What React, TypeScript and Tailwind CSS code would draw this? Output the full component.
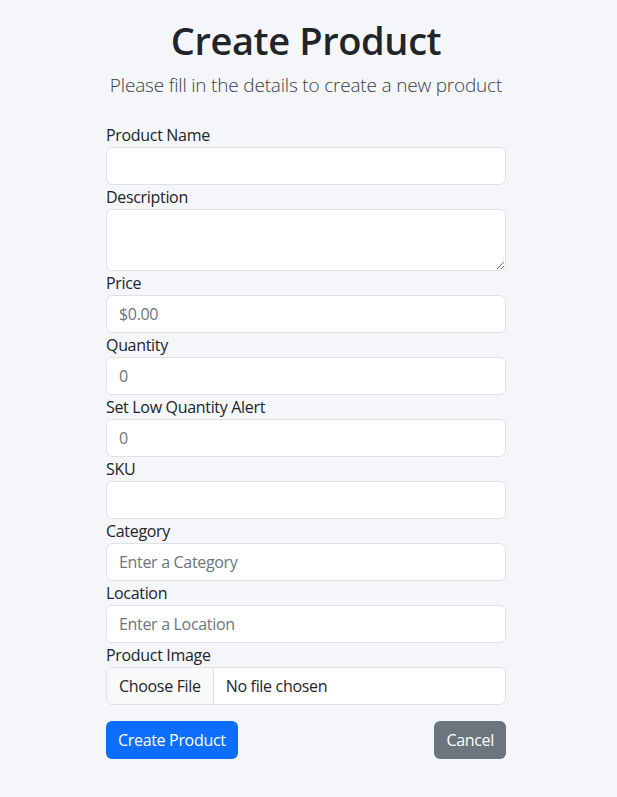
const fields: { label: string; placeholder?: string; kind?: "textarea" }[] = [
  { label: "Product Name" },
  { label: "Description", kind: "textarea" },
  { label: "Price", placeholder: "$0.00" },
  { label: "Quantity", placeholder: "0" },
  { label: "Set Low Quantity Alert", placeholder: "0" },
  { label: "SKU" },
  { label: "Category", placeholder: "Enter a Category" },
  { label: "Location", placeholder: "Enter a Location" },
];

const inputCls =
  "block w-full h-[38px] rounded-[6px] border border-[#dee2e6] bg-white px-3 text-base text-[#212529] placeholder:text-[#6c757d] outline-none";

export default function App() {
  return (
    <div
      className="min-h-screen bg-[#f4f6f9] text-[#212529]"
      style={{ fontFamily: '"Open Sans", "Noto Sans", sans-serif' }}
    >
      <div className="ml-[106px] w-[400px] pt-[18px]">
        <h1 className="text-center text-[38px] font-semibold leading-[1.2] tracking-[-0.01em]">Create Product</h1>
        <p className="mt-[6px] text-center text-[19px] font-light leading-[30px] text-[#3a414a] tracking-[-0.01em]">
          Please fill in the details to create a new product
        </p>

        <form className="mt-[23px]">
          {fields.map((f) => (
            <div key={f.label}>
              <label className="block text-base leading-6 tracking-[-0.02em]">{f.label}</label>
              {f.kind === "textarea" ? (
                <textarea
                  rows={2}
                  className="block w-full h-[62px] rounded-[6px] border border-[#dee2e6] bg-white px-3 py-1.5 text-base outline-none"
                />
              ) : (
                <input type="text" placeholder={f.placeholder} className={inputCls + " tracking-[-0.02em]"} />
              )}
            </div>
          ))}

          <div>
            <label className="block text-base leading-6 tracking-[-0.02em]">Product Image</label>
            <div className="flex h-[38px] w-full overflow-hidden rounded-[6px] border border-[#dee2e6] bg-white tracking-[-0.02em]">
              <span className="flex items-center border-r border-[#dee2e6] bg-[#f8f9fa] px-3">Choose File</span>
              <span className="flex items-center px-3">No file chosen</span>
            </div>
          </div>

          <div className="mt-4 flex items-center justify-between">
            <button
              type="button"
              className="h-[38px] rounded-[6px] bg-[#0d6efd] px-3 text-base text-white tracking-[-0.02em]"
            >
              Create Product
            </button>
            <button
              type="button"
              className="h-[38px] rounded-[6px] bg-[#6c757d] px-3 text-base text-white tracking-[-0.02em]"
            >
              Cancel
            </button>
          </div>
        </form>
      </div>
    </div>
  );
}
